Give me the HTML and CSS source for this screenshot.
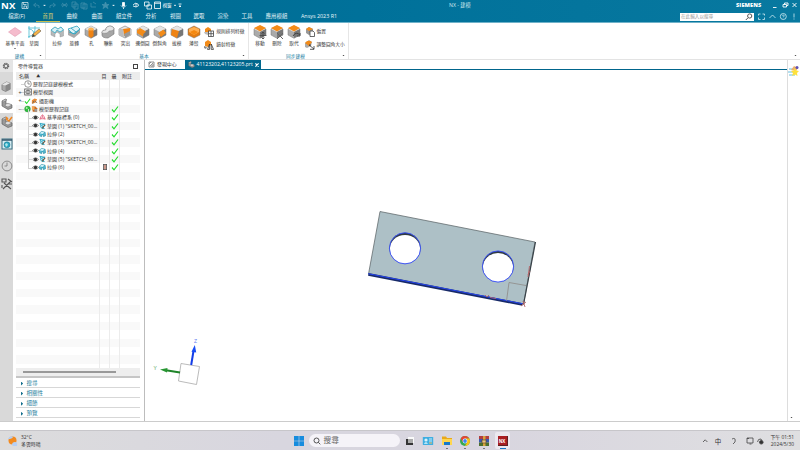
FILE: index.html
```html
<!DOCTYPE html>
<html lang="zh-Hant">
<head>
<meta charset="utf-8">
<title>NX - 建模</title>
<link rel="stylesheet" href="styles.css">
</head>
<body>
<svg class="defs" width="0" height="0">
  <defs>
    <symbol id="cube" viewBox="0 0 14 14"><path d="M7 1L13 4V10L7 13.3L1 10V4Z" fill="#aaa" stroke="#777" stroke-width=".5"/><path d="M7 1L13 4L7 7L1 4Z" fill="#e4e4e4"/><path d="M7 7L13 4V10L7 13Z" fill="#777"/></symbol>
    <symbol id="extrude" viewBox="0 0 14 14"><path d="M1 5L5 2L8 4L11 2L13.5 5V11L10 12V9L7 7L5 9V12L1 10Z" fill="#b5b9ba" stroke="#888" stroke-width=".4"/><path d="M1 5L5 2L8 4L11 2L13.5 5L10 7L7 5L5 8Z" fill="#d9f1f7" stroke="#36acc7" stroke-width=".8"/></symbol>
    <symbol id="revolve" viewBox="0 0 14 14"><path d="M1 4L10 1L13 4V8L7 13L1 10Z" fill="#aaa"/><path d="M1 4L10 1L13 4L6 9Z" fill="#def2f6" stroke="#36acc7" stroke-width=".8"/><path d="M2 7L8 9L13 4M4 3L9 7" fill="none" stroke="#2ea7c4" stroke-width=".9"/></symbol>
    <symbol id="hole" viewBox="0 0 14 14"><use href="#cube"/><path d="M4.5 4V11L7 13L9.5 11V4Z" fill="#ef8313"/><ellipse cx="7" cy="4" rx="2.7" ry="1.5" fill="#ffb354"/></symbol>
    <symbol id="unite" viewBox="0 0 14 14"><path d="M1 7Q1 5 5 5V3Q9-1 13 3V9L7 13Q1 13 1 10Z" fill="#a6a6a6" stroke="#707070" stroke-width=".6"/><path d="M1 7Q1 5 5 5V3Q9-1 13 3Q13 6 8 6Q7 9 1 8Z" fill="#e6e6e6" stroke="#777" stroke-width=".4"/></symbol>
    <symbol id="trim" viewBox="0 0 14 14"><path d="M1 4L7 1L13 4V10L7 13L1 10Z" fill="#e8e8e8" stroke="#777" stroke-width=".6"/><path d="M5 4L12 3V9L6 11Z" fill="#ef8313"/><path d="M1 4L5 4L6 12L1 10Z" fill="#bbb"/><path d="M6 9L12 6V10L7 13Z" fill="#999"/></symbol>
    <symbol id="blend" viewBox="0 0 14 14"><use href="#cube"/><path d="M1 5.500L4 3L10 6.500Q7.500 8 7 11.500L1 8Z" fill="#f28b19"/></symbol>
    <symbol id="chamfer" viewBox="0 0 14 14"><use href="#cube"/><path d="M5 8L10.500 4.500L13 8L8 12Z" fill="#f28b19"/></symbol>
    <symbol id="draft" viewBox="0 0 14 14"><use href="#cube"/><path d="M2 4L9 6L7 13L1 10Z" fill="#ef8313"/></symbol>
    <symbol id="shell" viewBox="0 0 14 14"><path d="M1 4L7 1L13 4V10L7 13L1 10Z" fill="#e47c10" stroke="#777" stroke-width=".5"/><path d="M2 4L7 2L12 4V7L7 10L2 7Z" fill="#ffb053"/><path d="M3 7L7 5L11 7L7 10Z" fill="#f58910"/></symbol>
    <symbol id="top" viewBox="0 0 14 14"><use href="#cube"/><path d="M7 0L13 3L7 6.5L1 3Z" fill="#f58b18"/></symbol>
    <symbol id="move" viewBox="0 0 14 14"><use href="#top"/><path d="M10 7V14M6.5 10.5H13.5M8.5 8.5L10 7L11.5 8.5M8.5 12.5L10 14L11.5 12.5" fill="none" stroke="#444" stroke-width=".8"/></symbol>
    <symbol id="delete" viewBox="0 0 14 14"><use href="#top"/><path d="M7 8L13 14M13 8L7 14" fill="none" stroke="#666" stroke-width="1"/></symbol>
    <symbol id="replace" viewBox="0 0 14 14"><use href="#top"/><path d="M6 11Q9 6 13 10M13 8V11H10" fill="none" stroke="#444" stroke-width="1"/></symbol>
    <symbol id="pattern" viewBox="0 0 10 10"><path d="M1 2L4 0L7 2V5L4 7L1 5Z" fill="#f28b19"/><path d="M0 5H4V8L1 7Z" fill="#bbb"/><rect x="4.5" y="4" width="5" height="5.4" fill="#fff" stroke="#444" stroke-width=".8"/><path d="M7 4V9.4M4.5 6.7H9.5" stroke="#444" stroke-width=".8"/></symbol>
    <symbol id="mirror" viewBox="0 0 10 10"><path d="M1 2L4 0L7 2V5L4 7L1 6Z" fill="#f28b19"/><path d="M0 6L3 7L2 9L0 8Z" fill="#888"/><path d="M3.5 9.4L5.6 4V9.4ZM9.5 9.4L7.2 4V9.4Z" fill="#fff" stroke="#333" stroke-width=".8"/></symbol>
    <symbol id="offset" viewBox="0 0 10 10"><path d="M1 2L4 0L8 2V6L4 8L1 6Z" fill="#999"/><path d="M1 2L4 0L8 2L4 4Z" fill="#f28b19"/><path d="M5 4H8L9.5 5.5V9.5H5Z" fill="#fff" stroke="#444" stroke-width=".8"/></symbol>
    <symbol id="resize" viewBox="0 0 10 10"><path d="M0 3L4 0L7 2L6 6L2 8L0 7Z" fill="#aaa"/><path d="M0 3Q3-1 7 2L4 6Z" fill="#f28b19"/><path d="M4 5L9 9M9 6V9.3H5M4 5H6" fill="none" stroke="#333" stroke-width=".8"/></symbol>
    <symbol id="check" viewBox="0 0 8 8"><path d="M1 4.5L3 6.8L7 1.5" fill="none" stroke="#22dc2c" stroke-width="1.15"/></symbol>
    <symbol id="eye" viewBox="0 0 8 8"><path d="M.5 4Q4 .3 7.5 4Q4 7.7 .5 4Z" fill="#fff" stroke="#444" stroke-width=".7"/><circle cx="4" cy="4" r="1.9" fill="#333"/></symbol>
    <symbol id="sk" viewBox="0 0 8 8"><path d="M1 1L7 2L3 3L6 7Q1 7 2 3Z" fill="#bfeaf4" stroke="#159cba" stroke-width=".9"/><path d="M3.5 6.7L7 2.8" stroke="#69543c" stroke-width="1.3"/></symbol>
    <symbol id="ex" viewBox="0 0 8 8"><path d="M.5 3L3 1L7 2L7.5 6L5 7V5L3 5V7L.5 6Z" fill="#56b9d0" stroke="#167e98" stroke-width=".6"/><path d="M1 3L3 1.5L6 2L4 4Z" fill="#d7f4fa"/></symbol>
    <symbol id="part" viewBox="0 0 12 12"><path d="M1 3L5 1V6L11 7V10L7 11.5L1 8Z" fill="#999" stroke="#555" stroke-width=".6"/><path d="M1 3L5 1L6 2L2 4ZM4 8Q5 4 9 6L11 7L7 9Z" fill="#ddd" stroke="#666" stroke-width=".5"/></symbol>
    <symbol id="block" viewBox="0 0 12 12"><path d="M1 4L6 1L10 2.500V9L5 11.500L1 9.500Z" fill="#aaa" stroke="#666" stroke-width=".6"/><path d="M1 4L6 1L10 2.500L5 5Z" fill="#e6e6e6"/><path d="M5 5L10 2.500V9L5 11.500Z" fill="#888"/></symbol>
  </defs>
</svg>
<div class="app">
  <header class="head">
    <div class="titlebar">
      <div class="brand">NX</div>
      <svg class="quick" width="164" height="11" viewBox="20 0 164 11" fill="none" stroke="#fff" stroke-width=".8">
        <path d="M22 2.5H28V8.5H22ZM23.3 2.5V4.5H26.5M24 8V6H26.5V8" opacity=".8"/>
        <g opacity=".25"><path d="M36 3L33.5 5L36 7M34 5H37Q40 5 39 8M53 3L55.5 5L53 7M55 5H52Q49 5 50 8M62 7L67 3M62 3L67 7M61 5H68M72 2H76V7H72ZM74 4H78V9H74ZM81 3H85V8H81ZM83 4H87V9H83ZM91 3V7H96M93 2L96 4"/><path d="M105.500 2L106.500 4.500H109L107 6L108 8.500L105.500 7L103 8.500L104 6L102 4.500H104.500Z" fill="#fff"/></g>
        <path d="M43.500 5H45.500L44.500 6ZM112.500 5H114.500L113.500 6ZM174 5H176L175 6Z" fill="#fff" stroke-width=".3"/>
        <path d="M122.500 2.500H124.500V6H122.500Z" fill="#fff"/><path d="M121 5.500Q123.500 9 126 5.500M123.500 7.500V9M133 5Q135 2 138 4Q140 6 136 7L133 6M136 3V7M144.500 2H149V6H144.500ZM147 5H151.500V9H147ZM154.500 2H160.500V8.500H154.500ZM154.500 3.300H160.500"/>
        <text x="162.500" y="7.200" class="quick-text">視窗</text>
        <path d="M178.500 4H181.500M179 6H181L180 7Z" fill="#fff"/>
      </svg>
      <div class="window-title">NX - 建模</div>
      <div class="siemens">SIEMENS</div>
      <svg class="winbuttons" width="34" height="11" viewBox="766 0 34 11" fill="none" stroke="#fff" stroke-width=".9"><path d="M773 7.500H776.500M783 4.500H786.500V7H783ZM784.500 4.500V3H788V5.500H786.500M792.500 3L796.500 7M796.500 3L792.500 7"/></svg>
    </div>
    <div class="menubar">
      <nav class="tabs"><span>檔案(F)</span><span class="active">首頁</span><span>曲線</span><span>曲面</span><span>組立件</span><span>分析</span><span>視圖</span><span>選取</span><span>渲染</span><span>工具</span><span>應用模組</span><span>Ansys 2023 R1</span></nav>
      <div class="finder"><span>在此輸入以搜尋</span><svg width="8" height="8" viewBox="0 0 8 8" fill="none" stroke="#555"><circle cx="4.700" cy="3" r="2.100"/><path d="M3 4.800L.8 7"/></svg></div>
      <svg class="helpicons" width="46" height="11" viewBox="754 11 46 11" fill="none" stroke="#d4edf4" stroke-width=".8"><path d="M758.500 15.500V14H760.500M762.500 14H764.500V15.500M764.500 17.500V19.500H762.500M760.500 19.500H758.500V17.500M769.500 18L772.500 15L775.500 18"/><circle cx="783.300" cy="16.500" r="3"/><path d="M782.300 15.800Q783.300 14.500 784.200 15.500Q784 16.500 783.300 17M783.300 17.700V18.200M794 13.500V17.500M794 18.500V19.500"/></svg>
    </div>
  </header>
  <section class="ribbon">
    <div class="group datum">
      <div class="tools">
        <div class="tool"><svg width="14" height="14" viewBox="0 0 14 14"><path d="M.5 7L7 2.500L13.500 7L7 11.500Z" fill="#f5bccd" stroke="#df91a8" stroke-width=".5"/></svg><span>基準平面</span><i class="arrow"></i></div>
        <div class="tool"><svg width="14" height="14" viewBox="0 0 14 14"><path d="M1 3H13M2 1V13M1 12Q9 10 8 1M2 4Q7 4 8 12" fill="none" stroke="#48bad0" stroke-width=".8"/><path d="M5 12L6 9L12 4L14 6L8 11Z" fill="#f5b347" stroke="#6c604f" stroke-width=".6"/><path d="M5 12L6 9L8 11Z" fill="#444"/></svg><span>草圖</span></div>
      </div>
      <div class="group-name">建構</div><i class="arrow corner"></i>
    </div>
    <div class="group base">
      <div class="tools">
        <div class="tool"><svg width="14" height="14"><use href="#extrude"/></svg><span>拉伸</span></div>
        <div class="tool"><svg width="14" height="14"><use href="#revolve"/></svg><span>旋轉</span></div>
        <div class="tool"><svg width="14" height="14"><use href="#hole"/></svg><span>孔</span></div>
        <div class="tool"><svg width="14" height="14"><use href="#unite"/></svg><span>聯集</span></div>
        <div class="tool"><svg width="14" height="14"><use href="#trim"/></svg><span>突出</span></div>
        <div class="tool"><svg width="14" height="14"><use href="#blend"/></svg><span>邊倒圓</span></div>
        <div class="tool"><svg width="14" height="14"><use href="#chamfer"/></svg><span>倒斜角</span></div>
        <div class="tool"><svg width="14" height="14"><use href="#draft"/></svg><span>拔模</span></div>
        <div class="tool"><svg width="14" height="14"><use href="#shell"/></svg><span>薄殼</span></div>
        <div class="stack"><div><svg width="10" height="10"><use href="#pattern"/></svg><span>規則排列特徵</span></div><div><svg width="10" height="10"><use href="#mirror"/></svg><span>鏡射特徵</span></div></div>
      </div>
      <div class="group-name">基本</div><i class="arrow corner"></i>
    </div>
    <div class="group sync">
      <div class="tools">
        <div class="tool"><svg width="14" height="14"><use href="#move"/></svg><span>移動</span></div>
        <div class="tool"><svg width="14" height="14"><use href="#delete"/></svg><span>刪除</span></div>
        <div class="tool"><svg width="14" height="14"><use href="#replace"/></svg><span>取代</span></div>
        <div class="stack"><div><svg width="10" height="10"><use href="#offset"/></svg><span>偏置</span></div><div><svg width="10" height="10"><use href="#resize"/></svg><span>調整圓角大小</span></div></div>
      </div>
      <div class="group-name">同步建模</div><i class="arrow corner"></i>
    </div>
    <i class="arrow corner"></i>
  </section>
  <main class="work">
    <aside class="rail">
      <div class="gear"><svg width="8" height="8" viewBox="0 0 8 8"><circle cx="4" cy="4" r="2.500" fill="none" stroke="#666" stroke-width="1.500" stroke-dasharray="1.200 .76"/><circle cx="4" cy="4" r="1.900" fill="none" stroke="#555" stroke-width=".8"/></svg></div>
      <div class="railitem first"><svg width="11" height="11"><use href="#block"/></svg></div>
      <div class="railitem on"><svg width="12" height="12"><use href="#part"/></svg></div>
      <div class="railitem"><svg width="12" height="12" viewBox="0 0 12 12"><use href="#part"/><path d="M5 3L8 5L11 1M5 1L7 3" fill="none" stroke="#ef8622" stroke-width="1.500"/></svg></div>
      <div class="railitem web"><svg width="12" height="12" viewBox="0 0 12 12"><rect x="1" y="1" width="10" height="10" fill="#d8edf2" stroke="#397184"/><path d="M1 2H11" stroke="#33556a" stroke-width="1.500"/><circle cx="6" cy="6.800" r="3" fill="#25a8c5" stroke="#176d83" stroke-width=".5"/><path d="M4 6L6 5L7 7L5 9" fill="#aee5e8"/></svg></div>
      <div class="railitem clock"><svg width="12" height="12" viewBox="0 0 12 12" fill="none" stroke="#777" stroke-width=".8"><circle cx="6" cy="6" r="4.900"/><path d="M6 2.500V6H3.500"/></svg></div>
      <div class="railitem toolsicon"><svg width="12" height="12" viewBox="0 0 12 12" fill="none" stroke="#555" stroke-width="1.100"><path d="M1 1H5V4H1ZM7 1L11 4M2 11L10 3M3 5L10 11M7 6H11M1 7V10"/></svg></div>
    </aside>
    <aside class="navigator">
      <div class="panel-title"><span>零件導覽器</span><i></i></div>
      <div class="tree">
        <div class="columns"><span class="name">名稱 <b>▲</b></span><span>目</span><span>最</span><span class="note">附註</span></div>
        <div class="row l1"><div class="cell"><svg width="8" height="8" viewBox="0 0 8 8" fill="none" stroke="#555" stroke-width=".6"><circle cx="4" cy="4" r="3.300"/><path d="M4 1.500V4H6"/></svg><span>歷程記錄建模模式</span></div><i></i><i></i><i></i></div>
        <div class="row l1 plus"><div class="cell"><svg width="8" height="8" viewBox="0 0 8 8" fill="none" stroke="#555" stroke-width=".8"><rect x=".7" y="1" width="6.600" height="6"/><path d="M2 5V3L4 2L6 3V5L4 6ZM4 2V6"/></svg><span>模型視圖</span></div><i></i><i></i><i></i></div>
        <div class="row l1 plus"><div class="cell"><svg width="7" height="8"><use href="#check"/></svg><svg width="7" height="8" viewBox="0 0 8 8"><path d="M1 3L4 1L7 2L5 6L1 7Z" fill="#ec8d36"/><path d="M4 4L7 6M2 7L3 4" stroke="#765" /></svg><span>攝影機</span></div><i></i><i></i><i></i></div>
        <div class="row l1 minus"><div class="cell"><svg width="7" height="8" viewBox="0 0 7 8"><circle cx="3.500" cy="4" r="2.900" fill="#2ebd3d" stroke="#278833" stroke-width=".4"/><circle cx="2.700" cy="3" r="1" fill="#adf1a8"/></svg><svg width="7" height="8" viewBox="0 0 8 8"><path d="M1 1H5L7 3V7H2Z" fill="#c96b25"/><path d="M1 1H4V5H1Z" fill="#f5a750"/><path d="M4 4H7V7H4Z" fill="#999"/></svg><span>模型歷程記錄</span></div><i></i><i><svg width="8" height="8"><use href="#check"/></svg></i><i></i></div>
        <div class="row l2"><div class="cell"><svg width="7" height="7"><use href="#eye"/></svg><svg width="7" height="8" viewBox="0 0 8 8" fill="none" stroke="#df5271" stroke-width=".8"><path d="M4 1V4L1 7M4 4L7 7M3 2L1 6H7L5 2"/></svg><span>基準座標系 (0)</span></div><i></i><i><svg width="8" height="8"><use href="#check"/></svg></i><i></i></div>
        <div class="row l2"><div class="cell"><svg width="7" height="7"><use href="#eye"/></svg><svg width="7" height="8"><use href="#sk"/></svg><span>草圖 (1) "SKETCH_00...</span></div><i></i><i><svg width="8" height="8"><use href="#check"/></svg></i><i></i></div>
        <div class="row l2"><div class="cell"><svg width="7" height="7"><use href="#eye"/></svg><svg width="7" height="8"><use href="#ex"/></svg><span>拉伸 (2)</span></div><i></i><i><svg width="8" height="8"><use href="#check"/></svg></i><i></i></div>
        <div class="row l2"><div class="cell"><svg width="7" height="7"><use href="#eye"/></svg><svg width="7" height="8"><use href="#sk"/></svg><span>草圖 (3) "SKETCH_00...</span></div><i></i><i><svg width="8" height="8"><use href="#check"/></svg></i><i></i></div>
        <div class="row l2"><div class="cell"><svg width="7" height="7"><use href="#eye"/></svg><svg width="7" height="8"><use href="#ex"/></svg><span>拉伸 (4)</span></div><i></i><i><svg width="8" height="8"><use href="#check"/></svg></i><i></i></div>
        <div class="row l2"><div class="cell"><svg width="7" height="7"><use href="#eye"/></svg><svg width="7" height="8"><use href="#sk"/></svg><span>草圖 (5) "SKETCH_00...</span></div><i></i><i><svg width="8" height="8"><use href="#check"/></svg></i><i></i></div>
        <div class="row l2 last"><div class="cell"><svg width="7" height="7"><use href="#eye"/></svg><svg width="7" height="8"><use href="#ex"/></svg><span>拉伸 (6)</span></div><i><svg width="4" height="6" viewBox="0 0 4 6"><rect x=".4" y=".4" width="3.200" height="5.200" fill="#d6bbb3" stroke="#555" stroke-width=".8"/><path d="M1 2H3M1 4H3" stroke="#b6573f" stroke-width=".7"/></svg></i><i><svg width="8" height="8"><use href="#check"/></svg></i><i></i></div>
        <div class="blank"><i></i><i></i><i></i><i></i></div>
      </div>
      <div class="hscroll"><i></i></div>
      <div class="sections"><div>搜尋</div><div>相關性</div><div>細節</div><div>預覽</div></div>
    </aside>
    <section class="document">
      <div class="doctabs">
        <div class="doctab"><svg width="7" height="7" viewBox="0 0 7 7" fill="none" stroke="#777" stroke-width=".8"><path d="M1 1H6V6H1ZM1 3L3 1M2 5L5 2M4 6V4H6"/></svg><span>發現中心</span></div>
        <div class="doctab current"><svg width="7" height="7"><use href="#part"/></svg><span>41123202,41123205.prt</span><svg class="close" width="4" height="4" viewBox="0 0 4 4"><path d="M.4 .4L3.600 3.600M3.600 .4L.4 3.600" stroke="#fff" stroke-width="1.200"/></svg></div>
      </div>
      <div class="canvas">
        <svg width="642" height="351" viewBox="145 70 642 351">
          <path d="M380 211.500L535 242L523.500 304L368.500 274Z" fill="#adc0c6" stroke="#555d60" stroke-width=".7"/>
          <path d="M535.500 242L523.500 304.500" stroke="#384248" stroke-width="1.200"/>
          <path d="M368.300 274.400L522.500 304.500" stroke="#182a68" stroke-width="2.600"/>
          <path d="M368.300 273.700L522.500 303.700" stroke="#2849ff" stroke-width=".9"/>
          <path d="M506.500 301L509 282.500L526 285.500" fill="none" stroke="#89827e" stroke-width=".7"/>
          <g><circle cx="405" cy="248.300" r="15.600" fill="#303b43"/><ellipse cx="405" cy="249.300" rx="15.200" ry="14.400" fill="#fff"/><circle cx="405" cy="248.300" r="15.600" fill="none" stroke="#344dff" stroke-width=".9"/></g>
          <g><circle cx="498" cy="266.500" r="15.600" fill="#303b43"/><ellipse cx="498" cy="267.500" rx="15.200" ry="14.400" fill="#fff"/><circle cx="498" cy="266.500" r="15.600" fill="none" stroke="#344dff" stroke-width=".9"/></g>
          <path d="M529.500 266L528 277M528 275L530 271M485 295L487 297L489 295M490 297.500L496 298.500M523 301L525 307M526 302L521 306" fill="none" stroke="#b46368" stroke-width=".9"/>
          <path d="M181 363.500L199.500 366.500L196.500 384.500L178.500 381Z" fill="#fff" stroke="#aaa" stroke-width=".8"/>
          <path d="M191.200 365L193.500 351" stroke="#143de7" stroke-width="2"/><path d="M194.800 345L196.200 352.500L191.500 351.700Z" fill="#174df6"/>
          <path d="M180 372.600L166 370.200" stroke="#1f8429" stroke-width="2"/><path d="M160 369.400L167.500 368L167 372.500Z" fill="#279632"/>
          <text x="194" y="343" class="axis z">Z</text><text x="153.500" y="369.800" class="axis y">Y</text>
        </svg>
      </div>
    </section>
    <aside class="rightbar"><svg width="12" height="12" viewBox="0 0 12 12"><path d="M1 4H6M0 7H6M1 10H7" stroke="#67bfe1"/><path d="M3 5L6 1L10 3L8 6Z" fill="#ecb16d"/><circle cx="9" cy="2.500" r="1.500" fill="#6050b5"/><path d="M7 3L8.300 5.500L11 6L9 8L9.500 11L7 9.500L4 11L5 8L3 6L5.800 5.500Z" fill="#ffe13c"/></svg><i class="arrow"></i></aside>
  </main>
  <div class="status"></div>
  <footer class="taskbar">
    <div class="weather"><svg width="12" height="12" viewBox="0 0 12 12"><circle cx="5.500" cy="5.500" r="4" fill="#f28b20"/><path d="M1 4Q3 0 6 2Q5 4 1 4ZM5 10Q5 7 8 7Q11 7 10 11H6Z" fill="#b6cff4"/></svg><div>32°C<br>多雲時晴</div></div>
    <div class="taskcenter">
      <svg class="start" width="10" height="10" viewBox="0 0 10 10"><path d="M0 0H4.700V4.700H0ZM5.300 0H10V4.700H5.300ZM0 5.300H4.700V10H0ZM5.300 5.300H10V10H5.300Z" fill="#168cde"/></svg>
      <div class="tasksearch"><svg width="8" height="8" viewBox="0 0 8 8" fill="none" stroke="#444" stroke-width=".9"><circle cx="3.500" cy="3.500" r="2.500"/><path d="M5.300 5.300L7.300 7.300"/></svg><span>搜尋</span></div>
      <div class="app-icon"><svg width="12" height="12" viewBox="0 0 12 12"><path d="M4 2H10V8H4Z" fill="#f9f9f9"/><path d="M2 4H4V8H9V10H2Z" fill="#333"/><path d="M4 4H9V8H4Z" fill="#aaa"/></svg></div>
      <div class="app-icon"><svg width="12" height="12" viewBox="0 0 12 12"><rect x=".8" y="2" width="10.400" height="8" rx=".6" fill="#3faee1"/><circle cx="4" cy="5" r="1.600" fill="#d9f3fb"/><path d="M1.800 9Q4 5 6 9Z" fill="#b4e6f7"/><path d="M7 4H10M7 6H10" stroke="#e7faff" stroke-width=".8"/><path d="M7 8H10" stroke="#f4be65"/></svg></div>
      <div class="app-icon open"><svg width="12" height="12" viewBox="0 0 12 12"><path d="M1 1.500H5L6 3H11V10H1Z" fill="#e9a91b"/><path d="M1 4H11V10H1Z" fill="#ffd64e"/><path d="M3 7H9V10H3Z" fill="#1679c8"/></svg></div>
      <div class="app-icon open"><svg width="12" height="12" viewBox="0 0 12 12"><circle cx="6" cy="6" r="5" fill="#35a853"/><path d="M1.700 3.500A5 5 0 0 1 10.400 3.600H6L3.800 7Z" fill="#e94335"/><path d="M10.400 3.600A5 5 0 0 1 6 11L8.100 7L6 3.600Z" fill="#fbc117"/><circle cx="6" cy="6" r="2.400" fill="#fff"/><circle cx="6" cy="6" r="1.900" fill="#4285f4"/></svg></div>
      <div class="app-icon open"><svg width="12" height="12" viewBox="0 0 12 12"><path d="M1 1H11V4H1Z" fill="#b23e3e"/><path d="M1 4H11V7.500H1Z" fill="#3959ae"/><path d="M1 7.500H11V11H1Z" fill="#4b6e31"/><path d="M5 1H7.500V11H5Z" fill="#d8a43e"/><path d="M4 5H8V8H4Z" fill="#e8c481" stroke="#5c3d1d" stroke-width=".6"/></svg></div>
      <div class="app-icon selected"><div class="nxicon">NX</div></div>
    </div>
    <svg class="tray" width="68" height="20" viewBox="698 430 68 20" fill="none" stroke="#444" stroke-width=".8"><path d="M703 441L705.200 438.800L707.400 441M732 438Q736 436 735 441L733 443M747 437.500H749M751 437H753V442H747V437ZM749.500 443H751.500"/><text x="714.800" y="442.600" class="ime">中</text><path d="M757.500 441Q758 437.500 761 438L762 440" /><circle cx="761.300" cy="441.300" r="1.800" fill="#333"/></svg>
    <div class="time">下午 01:51<br>2024/5/30</div>
  </footer>
</div>
</body>
</html>
```
FILE: styles.css
```css
* { box-sizing: border-box; }
body { margin: 0; width: 800px; height: 450px; overflow: hidden; background: #fff; color: #333; font: 5px/1.2 "Open Sans", "Noto Sans CJK TC", sans-serif; }
svg { display: block; flex: none; }
.defs { position: absolute; }
.app { width: 800px; height: 450px; display: flex; flex-direction: column; }
.head { height: 23px; flex: none; background: linear-gradient(90deg, #00698f, #00719a 45%, #0879a0); border-bottom: 1px solid #70b2c9; color: #fff; }
.titlebar { height: 11px; display: flex; align-items: center; }
.brand { width: 20px; padding-left: 1px; font: bold 9.6px/11px "Open Sans", sans-serif; letter-spacing: .2px; }
.quick-text { font-size: 4.6px; fill: #fff; stroke: none; }
.window-title { flex: 1; padding-left: 265px; font-size: 5.2px; color: #d2e8ee; white-space: nowrap; }
.siemens { width: 30px; font: 900 5.6px/11px "Open Sans", sans-serif; letter-spacing: .1px; }
.menubar { height: 11px; display: flex; align-items: center; }
.tabs { width: 680px; height: 11px; display: grid; grid-template-columns: 36px 24px 24px 26px 28px 26px 23px 24px 24px 24px 35px 50px; font-size: 5.4px; line-height: 10px; text-align: center; white-space: nowrap; color: #eaf6f9; }
.tabs span:first-child { padding-right: 3px; }
.tabs .active { color: #ddd270; border-bottom: 1px solid #c8bd4d; }
.finder { width: 74px; height: 8px; padding: 0 1px; display: flex; align-items: center; justify-content: space-between; background: #fff; color: #999; font-size: 4.6px; }
.ribbon { height: 37px; flex: none; display: flex; position: relative; border-bottom: 1px solid #e3e3e3; font-size: 4.7px; }
.group { position: relative; height: 36px; border-right: 1px solid #e6e6e6; }
.datum { width: 46px; }
.base { width: 203px; }
.sync { width: 100px; }
.tools { display: grid; height: 30px; padding-top: 2px; }
.datum .tools { grid-template-columns: 20px 18px; padding-left: 5px; }
.base .tools { grid-template-columns: repeat(9, 17.1px) 46px; padding-left: 2.5px; }
.sync .tools { grid-template-columns: repeat(3, 17px) 44px; padding-left: 2.5px; }
.tool { display: flex; flex-direction: column; align-items: center; line-height: 7px; white-space: nowrap; }
.tool span { margin-top: .5px; }
.arrow { display: block; width: 3px; height: 1.5px; background: #222; clip-path: polygon(0 0, 100% 0, 50% 100%); }
.tool .arrow { margin-top: 1px; }
.corner { position: absolute; right: 3px; bottom: 3px; }
.stack { padding-left: 2px; }
.stack div { display: flex; align-items: center; gap: 2px; height: 14px; white-space: nowrap; }
.stack div:first-child { height: 13px; }
.group-name { text-align: center; line-height: 7px; color: #24809f; margin-top: -.5px; padding-right: 6px; }
.work { height: 362px; flex: none; display: flex; border-bottom: 1px solid #ccc; }
.rail { width: 13px; background: #d9d9d9; }
.gear { height: 12px; padding: 2px; background: #e5e5e5; }
.railitem { height: 18px; display: flex; align-items: center; justify-content: center; }
.first { margin-top: 5px; }
.on { background: #fff; }
.web { margin-top: 4px; }
.clock { margin-top: 4px; }
.navigator { width: 132px; padding: 0 4px 0 3px; border-right: 1px solid #bdbdbd; }
.panel-title { height: 12px; display: flex; align-items: center; justify-content: space-between; padding: 0 2px; color: #444; }
.panel-title i { width: 5px; height: 5px; border: 1px solid #444; }
.columns, .row, .blank { display: grid; grid-template-columns: 83px 10px 10px 21px; }
.columns { height: 8px; background: #ececec; line-height: 8px; }
.columns span { text-align: center; }
.columns .name { text-align: left; padding-left: 3px; }
.columns .note { text-align: left; padding-left: 3px; }
.columns b { font-size: 4px; margin-left: 6px; }
.row { height: 8.33px; background: #fff; }
.row:nth-child(odd) { background: #f8f8f8; }
.row > i { border-left: 1px solid #e8e8e8; display: flex; align-items: center; justify-content: center; }
.cell { position: relative; display: flex; align-items: center; white-space: nowrap; }
.cell span { padding-left: 1px; }
.l1 .cell { padding-left: 8px; }
.l2 .cell { padding-left: 16px; }
.l1 .cell::before, .l2 .cell::before { content: ""; position: absolute; left: 5px; top: 4px; width: 3px; border-top: 1px solid #d2d2d2; }
.l2 .cell::before { left: 12px; top: -4px; width: 4px; height: 8.3px; border-top: 0; border-left: 1px solid #d2d2d2; border-bottom: 1px solid #d2d2d2; }
.plus .cell::after, .minus .cell::after { content: "+"; position: absolute; left: 2.5px; font: 5px/7px "Liberation Sans", sans-serif; color: #333; }
.minus .cell::after { content: "−"; }
.blank { height: 196.4px; background: repeating-linear-gradient(#f9f9f9 0 8.33px, #fff 8.33px 16.66px); }
.blank i + i { border-left: 1px solid #ececec; }
.hscroll { height: 10px; background: #eee; border-bottom: 2px solid #c6c6c6; padding: 3px 0 0 7px; }
.hscroll i { display: block; width: 93px; height: 1.5px; background: #999; }
.sections div { height: 10.1px; padding-left: 10.5px; border-bottom: 1px solid #d7d7d7; color: #267e9c; font-size: 5.5px; line-height: 11px; position: relative; }
.sections div::before { content: ""; position: absolute; left: 5px; top: 3.5px; width: 2.2px; height: 4px; background: #16708e; clip-path: polygon(0 0, 100% 50%, 0 100%); }
.document { width: 642px; }
.doctabs { height: 10px; border-bottom: 1px solid #00658c; display: flex; }
.doctab { width: 39.5px; display: flex; align-items: center; gap: 2px; padding-left: 3px; font-size: 4.9px; white-space: nowrap; }
.current { width: 76px; background: #00688e; color: #fff; font-size: 5.1px; }
.close { margin-left: auto; margin-right: 2.5px; }
.axis { font: 5px "Liberation Sans", sans-serif; }
.z { fill: #6682f0; }
.y { fill: #4ba354; }
.rightbar { width: 13px; border-left: 1px solid #ddd; padding-top: 5px; display: flex; flex-direction: column; justify-content: space-between; }
.rightbar .arrow { margin: 0 0 3px 2px; }
.status { height: 8px; flex: none; background: #fff; }
.taskbar { height: 20px; flex: none; display: flex; align-items: center; background: linear-gradient(90deg, #dcdcdd, #d8d6df 35%, #d8d5df 60%, #dfdfe1); border-top: 1px solid #c7c6ca; }
.weather { width: 293px; padding-left: 7px; display: flex; align-items: center; gap: 2px; font-size: 4.9px; line-height: 6.5px; }
.taskcenter { width: 405px; height: 19px; display: flex; align-items: center; }
.tasksearch { width: 91px; height: 13px; margin: 0 1px 0 5px; padding: 0 4px; border-radius: 7px; background: #f5f3f8; display: flex; align-items: center; gap: 3px; font-size: 7.7px; color: #666; }
.app-icon { width: 18.5px; height: 17px; display: flex; align-items: center; justify-content: center; position: relative; }
.open::after, .selected::after { content: ""; position: absolute; bottom: 0; width: 2px; height: 1px; background: #777; }
.selected { width: 15px; margin-left: 2px; border-radius: 2px; background: #ebe8ef; }
.selected::after { width: 6px; background: #1976c5; }
.nxicon { width: 10px; height: 10px; background: #a91e22; border: solid #602022; border-width: 0 1px 1px 0; color: #fff; font: bold 4.5px/10px "Open Sans", sans-serif; text-align: center; }
.start { margin-left: .5px; }
.ime { font-size: 6.5px; fill: #333; stroke: none; }
.time { width: 28px; text-align: right; font-size: 4.9px; line-height: 7px; white-space: nowrap; }
```
